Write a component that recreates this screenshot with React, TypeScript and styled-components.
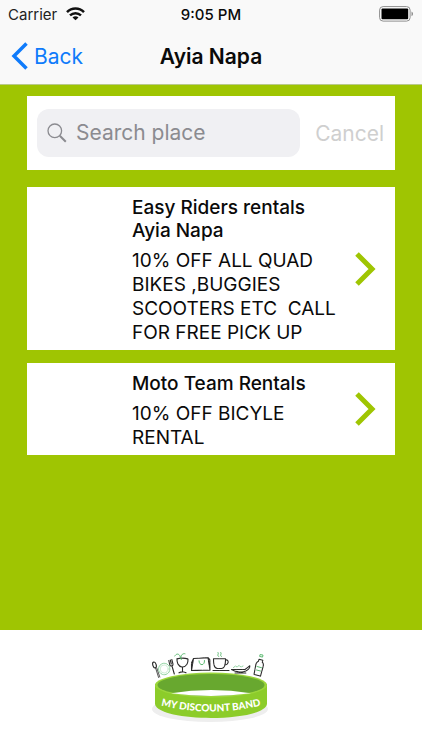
import React from "react";
import styled, { createGlobalStyle } from "styled-components";

const GlobalStyle = createGlobalStyle`
  *, *::before, *::after { box-sizing: border-box; }
  body { margin: 0; font-family: Inter, "Liberation Sans", sans-serif; color: #0a0a0a; background: #fff; }
  h1, h2, p, ul { margin: 0; padding: 0; font-weight: inherit; }
  button { border: 0; padding: 0; background: none; font: inherit; color: inherit; cursor: pointer; }
`;

const Screen = styled.div`
  display: flex;
  flex-direction: column;
  min-height: 100vh;
`;

const Header = styled.header`
  background: #f9f9f9;
  border-bottom: 1px solid #b9c98a;
`;

const StatusBar = styled.div`
  display: grid;
  grid-template-columns: 1fr auto 1fr;
  align-items: center;
  height: 28px;
  padding: 0 8px;
  font-size: 15px;
`;

const Carrier = styled.div`
  display: flex;
  align-items: center;
  gap: 9px;
  color: #222;
`;

const Clock = styled.time`
  font-weight: 500;
`;

const BatteryIcon = styled.svg`
  justify-self: end;
`;

const NavBar = styled.nav`
  display: grid;
  grid-template-columns: 1fr auto 1fr;
  align-items: center;
  height: 56px;
  padding: 0 10px;
`;

const BackButton = styled.button`
  && {
    display: flex;
    align-items: center;
    gap: 6px;
    justify-self: start;
    color: #0f7bfb;
    font-size: 21px;
  }
`;

const Title = styled.h1`
  && {
    font-size: 21px;
    font-weight: 600;
  }
`;

const Content = styled.main`
  flex: 1;
  padding: 11px 27px 24px;
  background: #9fc502;
`;

const SearchCard = styled.form`
  display: flex;
  align-items: center;
  gap: 15px;
  height: 74px;
  padding: 0 11px 0 10px;
  margin-bottom: 17px;
  background: #fff;
`;

const SearchField = styled.label`
  display: flex;
  flex: 1;
  min-width: 0;
  align-items: center;
  gap: 9px;
  height: 48px;
  padding: 0 10px;
  border-radius: 12px;
  background: #f0f0f3;
`;

const SearchInput = styled.input`
  flex: 1;
  min-width: 0;
  padding: 0;
  border: 0;
  outline: 0;
  background: none;
  color: #222;
  font: inherit;
  font-size: 21px;
  line-height: 26px;
  &::placeholder { color: #8b8b90; opacity: 1; }
`;

const CancelButton = styled.button`
  && { color: #cfcfcf; font-size: 21px; }
`;

const Offers = styled.ul`
  display: flex;
  flex-direction: column;
  gap: 13px;
  list-style: none;
`;

const OfferCard = styled.li`
  display: grid;
  grid-template-columns: 94px 1fr 22px;
  column-gap: 11px;
  align-items: center;
  padding-right: 18px;
  background: #fff;
`;

const OfferText = styled.div`
  grid-column: 2;
  display: flex;
  flex-direction: column;
  gap: 7px;
  padding: 9px 0 5px;
`;

const OfferName = styled.h2`
  && {
    max-width: 190px;
    font-size: 19px;
    font-weight: 500;
    line-height: 23px;
  }
`;

const OfferDetail = styled.p`
  font-size: 19px;
  line-height: 24px;
  white-space: pre-wrap;
`;

const Footer = styled.footer`
  display: flex;
  justify-content: center;
  height: 120px;
  padding-top: 18px;
  background: #fff;
`;

const BandLabel = styled.text`
  fill: #fff;
  font-family: Lato, "Open Sans", sans-serif;
  font-size: 10px;
  font-weight: 900;
`;

const offers = [
  { name: "Easy Riders rentals Ayia Napa", detail: "10% OFF ALL QUAD BIKES ,BUGGIES SCOOTERS ETC  CALL FOR FREE PICK UP" },
  { name: "Moto Team Rentals", detail: "10% OFF BICYLE RENTAL" },
];

function Wifi() {
  return (
    <svg width="19" height="14" viewBox="0 0 19 14" fill="none" stroke="#111" strokeWidth="2.5" aria-hidden="true">
      <path d="M1 5.2C5.8.3 13.2.3 18 5.2M4 8.4c3.2-3 7.8-3 11 0" />
      <path d="M9.5 13.3 6.5 10.5c1.7-1.6 4.3-1.6 6 0z" fill="#111" stroke="none" />
    </svg>
  );
}

function Battery() {
  return (
    <BatteryIcon width="35" height="16" viewBox="0 0 35 16" role="img" aria-label="Battery full">
      <rect x=".6" y=".6" width="30.5" height="14.5" rx="3.5" fill="#fff" stroke="#8d8d8d" />
      <rect x="2.5" y="2.5" width="26.7" height="10.7" rx="1" fill="#000" />
      <path d="M32.500 5.500c2 .8 2 3.900 0 4.700z" fill="#8d8d8d" />
    </BatteryIcon>
  );
}

function Logo() {
  return (
    <svg width="130" height="78" viewBox="147 648 130 78" role="img" aria-label="My Discount Band">
      <g fill="none" stroke="#2b2b2b" strokeWidth="1.1" strokeLinecap="round" strokeLinejoin="round">
        {/* spoon and fork */}
        <ellipse cx="155.500" cy="665" rx="1.700" ry="3" transform="rotate(-18 155.500 665)" />
        <path d="m156.600 668 3 9.500M157.800 668l3 9" strokeWidth=".8" />
        <path d="m169.800 660.500 1 4.500c.6 1.600 3.400 1 3.200-.8l-1.200-4.700M171.300 660l1 4M173 666l2.300 8" />
        {/* glass */}
        <path d="M178 658.500c-.8 11 11.500 11.500 11 .3M178 659c3-1.200 8-1.200 11 0M183.500 667v5M180 672.800c2-1.200 5-1.200 7 0" strokeDasharray="5 .7" />
        {/* bag */}
        <path d="m194.500 658.500 14.500-.8 2 12.500-18.500.3zM209 657.700l1.800 2 .2 10M194.500 658.500l-2 4.500v7.500" strokeDasharray="5 .8" />
        {/* cup and saucer */}
        <path d="M214.500 658.800h12c.2 7-1.500 9.700-4 9.700h-4c-3 0-4-3-4-9.700zM226.500 660c4-1 3.300 5-.8 5M214 670.500h16" strokeDasharray="6 .7" />
        {/* dish */}
        <path d="M232.500 669.500h13.500l4.800-3.700c.3 2-1.500 4-4 5.200-4 1.600-9 1.200-14.300-1.500M236 673h11" strokeDasharray="5 .8" />
        {/* bottle */}
        <path d="m260 659.300-.6 2c-1.800 1-2.400 2.200-2.700 4l-1.700 9.200 6.500 1.600 2.600-9.500c.5-1.800.4-3.400-.8-4.300l.5-2z" strokeDasharray="5 .6" />
      </g>
      <g fill="none" stroke="#5dbb72" strokeWidth="1" strokeLinecap="round">
        <circle cx="165.200" cy="669" r="5.700" stroke="#91d4a2" strokeDasharray="3 .6" />
        <circle cx="165.200" cy="669" r="4" stroke="#b8e3c2" strokeWidth=".7" />
        <path d="M175.800 656c1.500-2.500 3.500-2.500 5-.4l1.500 4M182 657c0-2 2-4 4-3.300" />
        <path d="M200 660.800c0 5.300 6 5.300 5.500-.3" />
        <path d="M219.500 656.500c-2-1.500.8-2.500-.4-4M222.300 656.500c-2-1.500.8-2.500-.4-4" />
        <path d="M234.500 667.500l2-1.500 1.500 1 2-1.500 2 1.500 2-1" stroke="#91d4a2" strokeDasharray="1.500 1" />
        <path d="m261 656.500 2.500.6.500-2-2.500-.5zM258 666.500l4.500 1.200M257.500 670l4 1" />
      </g>
      <ellipse cx="211" cy="709" rx="58" ry="13" fill="#eee" />
      <path d="M156 684v20c3 18.500 109 18.500 112 0v-20z" fill="#8ccc2a" />
      <ellipse cx="212" cy="685" rx="56" ry="12.500" fill="#9bd63a" />
      <ellipse cx="212" cy="685" rx="53.500" ry="11" fill="#68a82f" />
      <path d="M172 693.300Q212 686.500 252 693.300Q212 698.500 172 693.300z" fill="#fff" />
      <path id="band-curve" d="M158 704.500Q212 718.500 266 704.500" fill="none" />
      <BandLabel textAnchor="middle"><textPath href="#band-curve" startOffset="50%">MY DISCOUNT BAND</textPath></BandLabel>
    </svg>
  );
}

export default function App() {
  return (
    <Screen>
      <GlobalStyle />
      <Header>
        <StatusBar>
          <Carrier>Carrier <Wifi /></Carrier>
          <Clock>9:05 PM</Clock>
          <Battery />
        </StatusBar>
        <NavBar>
          <BackButton type="button">
            <svg width="18" height="28" viewBox="0 0 18 28" fill="none" stroke="currentColor" strokeWidth="3.5" aria-hidden="true"><path d="M16.5 1.5 4 14l12.5 12.5" /></svg>
            Back
          </BackButton>
          <Title>Ayia Napa</Title>
        </NavBar>
      </Header>
      <Content>
        <SearchCard role="search">
          <SearchField>
            <svg width="20" height="20" viewBox="0 0 20 20" fill="none" stroke="#8b8b90" aria-hidden="true"><circle cx="7.8" cy="7.8" r="6.800" strokeWidth="1.300" /><path d="m12.800 12.800 6 6" strokeWidth="2" /></svg>
            <SearchInput type="text" placeholder="Search place" aria-label="Search place" />
          </SearchField>
          <CancelButton type="button">Cancel</CancelButton>
        </SearchCard>
        <Offers>
          {offers.map((offer) => (
            <OfferCard key={offer.name}>
              <OfferText>
                <OfferName>{offer.name}</OfferName>
                <OfferDetail>{offer.detail}</OfferDetail>
              </OfferText>
              <svg width="22" height="34" viewBox="0 0 22 34" fill="none" stroke="#9fc502" strokeWidth="5" aria-hidden="true"><path d="m2 2 15 15L2 32" /></svg>
            </OfferCard>
          ))}
        </Offers>
      </Content>
      <Footer><Logo /></Footer>
    </Screen>
  );
}
